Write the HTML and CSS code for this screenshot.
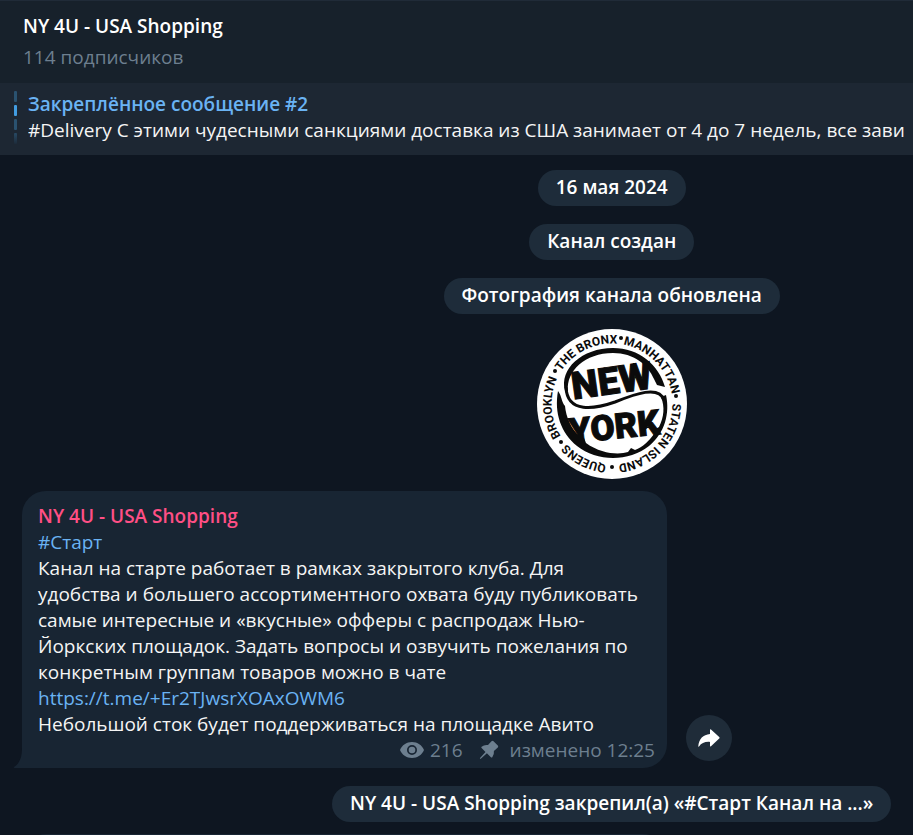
FILE: index.html
```html
<!DOCTYPE html>
<html lang="ru">
<head>
<meta charset="utf-8">
<meta name="viewport" content="width=device-width, initial-scale=1">
<title>NY 4U - USA Shopping</title>
<link rel="stylesheet" href="styles.css">
</head>
<body>
<div class="app">
  <header class="topbar">
    <h1>NY 4U - USA Shopping</h1>
    <p class="subtitle">114 подписчиков</p>
  </header>
  <section class="pinned">
    <div class="track"><span class="seg"></span><span class="seg seg-active"></span><span class="seg"></span><span class="seg seg-fade"></span></div>
    <div class="pinned-body">
      <h2 class="pinned-title">Закреплённое сообщение #2</h2>
      <p class="pinned-text">#Delivery С этими чудесными санкциями доставка из США занимает от 4 до 7 недель, все зави</p>
    </div>
  </section>
  <main class="chat">
    <div class="service">
      <span class="pill">16 мая 2024</span>
      <span class="pill">Канал создан</span>
      <span class="pill">Фотография канала обновлена</span>
    </div>
    <div class="service service-photo">
      <svg class="photo" viewBox="0 0 150 150" role="img" aria-label="New York">
        <defs>
          <path id="ring" d="M75 135.500a60.500 60.500 0 0 1 0-121a60.500 60.500 0 0 1 0 121"/>
        </defs>
        <circle cx="75" cy="75" r="75" fill="#fff"/>
        <g class="ring-text">
          <text><textPath href="#ring" startOffset="7.5%">QUEENS</textPath></text>
          <text><textPath href="#ring" startOffset="24%">BROOKLYN</textPath></text>
          <text><textPath href="#ring" startOffset="42.7%">THE BRONX</textPath></text>
          <text><textPath href="#ring" startOffset="62.7%">MANHATTAN</textPath></text>
          <text><textPath href="#ring" startOffset="86.6%">STATEN ISLAND</textPath></text>
        </g>
        <g fill="#0b0b0b">
          <circle cx="84" cy="9" r="2"/>
          <circle cx="139" cy="67" r="2"/>
          <circle cx="75" cy="138" r="2"/>
          <circle cx="24" cy="113" r="2"/>
          <circle cx="18" cy="42" r="2"/>
          <path d="M28 62C22 40 45 19 76 19C102 19 122 36 128 58L120 56L117 50C111 36 97 24 76 24C48 24 29 42 31 62Z"/>
          <path d="M21 62C25 67 24 72 28 77C29 88 34 99 42 107L47 109L49 114C64 125 82 126 91 123L94 119L98 121C106 118 112 112 117 105L117 101L122 98C127 88 128 78 124 68L129 66C133 84 128 104 112 117C92 133 60 133 40 117C24 104 17 84 21 62Z"/>
          <path d="M29 58C30 85 58 80 78 73C98 65 122 56 127 71" fill="none" stroke="#0b0b0b" stroke-width="3"/>
        </g>
        <text class="word" transform="rotate(-8 75 55)" x="75" y="65">NEW</text>
        <text class="word word-low" transform="rotate(-6 76 95)" x="77" y="110">YORK</text>
      </svg>
    </div>
    <div class="row">
      <article class="bubble bubble-tail">
        <svg class="tail" viewBox="0 0 10 20" aria-hidden="true"><path d="M10 0v20H2q-2 0-1-1C7 15 9 9 9 0z"/></svg>
        <h3 class="author">NY 4U - USA Shopping</h3>
        <p class="text"><a href="#start">#Старт</a><br>Канал на старте работает в рамках закрытого клуба. Для удобства и большего ассортиментного охвата буду публиковать самые интересные и «вкусные» офферы с распродаж Нью-Йоркских площадок. Задать вопросы и озвучить пожелания по конкретным группам товаров можно в чате <a href="#chat">https://t.me/+Er2TJwsrXOAxOWM6</a><br>Небольшой сток будет поддерживаться на площадке Авито</p>
        <footer class="meta">
          <svg class="eye" viewBox="0 0 24 16" aria-hidden="true"><path fill-rule="evenodd" d="M12 0C6.500 0 2 3.200 0 8c2 4.800 6.500 8 12 8s10-3.200 12-8C22 3.200 17.500 0 12 0zm0 3a5 5 0 1 1 0 10a5 5 0 0 1 0-10z"/><circle cx="12" cy="8" r="3.300"/></svg>
          <span>216</span>
          <svg class="pin" viewBox="0 0 20 20" aria-hidden="true"><path d="M12.500 1.200q1-.9 2 0l4.300 4.300q.9 1 0 2l-3.900 3.400q.5 3.500-1.600 6.300q-.7.7-1.400 0l-4-4L1.500 19L.8 18.300L6.500 12L2.600 8.100q-.7-.7 0-1.400q2.800-2.200 6.400-1.600z"/></svg>
          <span>изменено 12:25</span>
        </footer>
      </article>
      <button class="share" type="button" aria-label="Переслать">
        <svg viewBox="0 0 22 18" aria-hidden="true"><path d="M12 1q0-1.200 1-.4l8.200 7.400q.8.800 0 1.600L13 17.200q-1 .8-1-.4v-3.900C7 12.500 3.500 14 1 17.400q-.8.700-.7-.4C1 10 5 5.600 12 5z"/></svg>
      </button>
    </div>
    <div class="service"><span class="pill">NY 4U - USA Shopping закрепил(а) «#Старт Канал на ...»</span></div>
    <div class="row row-next"><article class="bubble"></article></div>
  </main>
</div>
</body>
</html>
```
FILE: styles.css
```css
* { box-sizing: border-box; margin: 0; }

body {
  background: #0e1621;
  color: #f5f5f5;
  font: 19px/26px "Open Sans", "Noto Sans", sans-serif;
}

.app {
  display: flex;
  flex-direction: column;
  height: 100vh;
  overflow: hidden;
}

h1, h2, h3 { font-size: 19px; font-weight: 600; }
h1 { color: #fff; }
a { color: #6ab3f3; text-decoration: none; }

.topbar {
  display: flex;
  flex-direction: column;
  gap: 5px;
  padding: 12px 23px 13px;
  border-top: 1px solid #202b38;
  background: #17212b;
}
.subtitle { color: #6d7f8f; }

.pinned {
  display: flex;
  gap: 11px;
  padding: 8px 0 11px 14px;
  background: #1d2733;
}
.track { display: flex; flex-direction: column; gap: 3px; }
.seg {
  width: 3px;
  height: 11px;
  border-radius: 1px;
  background: #2a5270;
}
.seg-active { background: #429de2; }
.seg-fade { background: linear-gradient(#284a65, #1d2b3a); }
.pinned-body { flex: 1; min-width: 0; overflow: hidden; }
.pinned-title { color: #6ab3f3; }
.pinned-text { white-space: nowrap; }

.chat { padding-top: 15px; }
.service {
  display: flex;
  flex-direction: column;
  align-items: center;
  gap: 18px;
  padding-left: 34%;
}
.service-photo { padding-top: 15px; }
.pill {
  padding: 4px 18px 6px;
  border-radius: 18px;
  background: #1e2c3a;
  color: #fff;
  font-weight: 600;
  white-space: nowrap;
}
.photo { width: 150px; height: 150px; }
.ring-text {
  fill: #0b0b0b;
  font: bold 12px Roboto, sans-serif;
  text-anchor: middle;
}
.word {
  fill: #0b0b0b;
  stroke: #0b0b0b;
  stroke-width: 1;
  font: 900 38px Roboto, sans-serif;
  text-anchor: middle;
}
.word-low { font-size: 35px; }

.row {
  display: flex;
  align-items: flex-end;
  gap: 19px;
  padding: 12px 22px 18px;
}
.row-next { padding-bottom: 0; }
.bubble {
  position: relative;
  width: 100%;
  max-width: 645px;
  min-height: 60px;
  padding: 12px 12px 5px 16px;
  border-radius: 24px;
  background: #182533;
}
.bubble-tail { border-bottom-left-radius: 0; }
.tail {
  position: absolute;
  left: -9px;
  bottom: 0;
  width: 10px;
  height: 20px;
  fill: #182533;
}
.author { color: #ff4f85; }
.text { padding-right: 12px; }

.meta {
  display: flex;
  align-items: center;
  justify-content: flex-end;
  gap: 6px;
  color: #6d7f8f;
}
.meta svg { fill: #6d7f8f; }
.eye { width: 24px; height: 16px; }
.pin { width: 20px; height: 20px; margin: 0 5px 0 10px; }

.share {
  display: grid;
  place-items: center;
  flex: none;
  width: 46px;
  height: 46px;
  margin-bottom: 7px;
  padding: 0;
  border: 0;
  border-radius: 50%;
  background: #1f2c39;
}
.share svg { width: 22px; height: 18px; fill: #fff; }
```
